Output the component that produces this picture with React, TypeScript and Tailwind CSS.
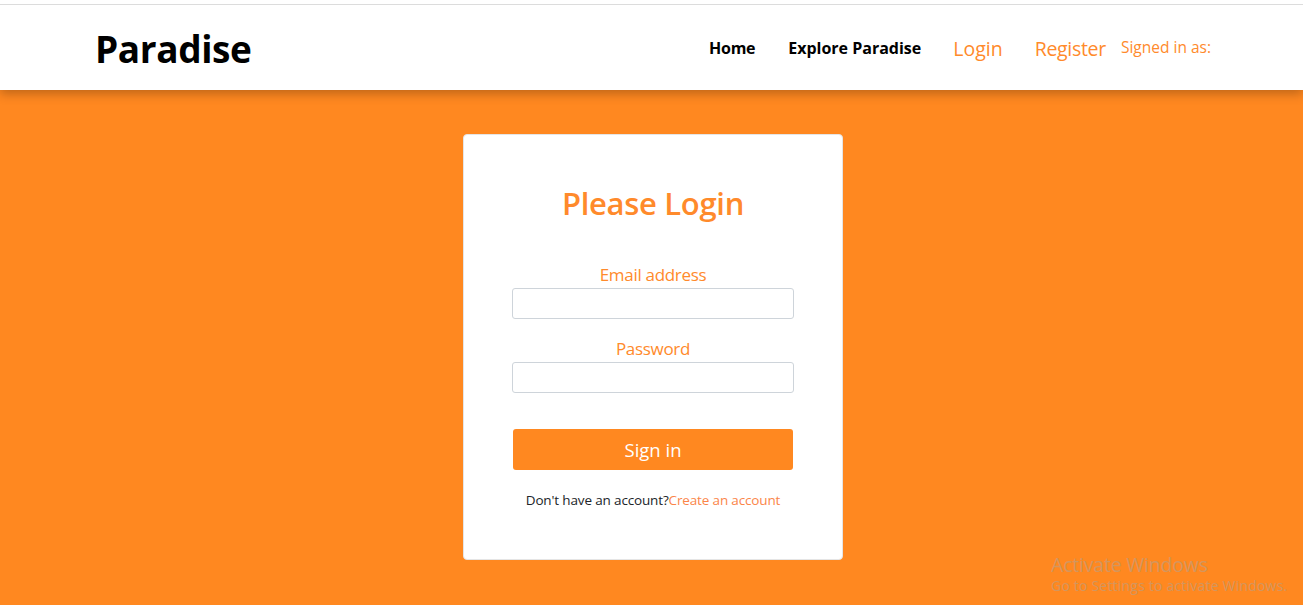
import React from 'react';

const font = { fontFamily: '"Open Sans", "Noto Sans", Arial, sans-serif' };

const Header: React.FC = () => {
  return (
    <header className="bg-white pt-1 relative z-10 shadow-[0_4px_10px_rgba(0,0,0,0.25)]">
      <div className="border-t border-[#dcdcdc] h-[86px] flex items-center pl-[95px] pr-[92px]">
        <h1 className="text-[37px] font-bold text-black tracking-[-0.4px] mt-[2px]">Paradise</h1>
        <nav className="ml-auto flex items-center">
          <a className="text-[16px] font-bold text-black mr-[33px] tracking-[-0.3px]">Home</a>
          <a className="text-[16px] font-bold text-black mr-[32px]">Explore Paradise</a>
          <a className="text-[19.5px] text-[#ff8a2b] mr-[32px] mt-[2px]">Login</a>
          <a className="text-[19.5px] text-[#ff8a2b] mr-[15px] mt-[2px] tracking-[-0.3px]">Register</a>
          <span className="text-[15.5px] text-[#ff8a2b]">Signed in as:</span>
        </nav>
      </div>
    </header>
  );
};

const LoginCard: React.FC = () => {
  return (
    <div className="w-[380px] bg-white rounded border border-[#e5e5e5] px-[48px] pt-[46px] pb-[49px] flex flex-col items-center">
      <h2 className="text-[31px] font-semibold text-[#ff8a2b] leading-[44px] tracking-[-0.3px]">Please Login</h2>
      <form className="w-full mt-[38px] flex flex-col items-center">
        <label className="text-[17px] text-[#ff8a2b] leading-[24px] tracking-[-0.3px]">Email address</label>
        <input type="email" className="w-[282px] h-[31px] mt-[1px] border border-[#ced4da] rounded-[3px] bg-white" />
        <label className="text-[17px] text-[#ff8a2b] leading-[24px] mt-[18px] tracking-[-0.3px]">Password</label>
        <input type="password" className="w-[282px] h-[31px] mt-[1px] border border-[#ced4da] rounded-[3px] bg-white" />
        <button type="button" className="w-[280px] h-[41px] mt-[36px] bg-[#ff8820] text-white text-[18.5px] rounded-[3px]">
          Sign in
        </button>
        <p className="mt-[20px] text-[13.5px] text-[#212529] tracking-[-0.15px]">
          Don't have an account?<a className="text-[#fb8549]">Create an account</a>
        </p>
      </form>
    </div>
  );
};

const App: React.FC = () => {
  return (
    <div className="min-h-[605px] bg-[#ff8820] relative" style={font}>
      <Header />
      <main className="flex justify-center pt-[44px] pb-[45px] pl-[3px]">
        <LoginCard />
      </main>
      <div className="absolute left-[1051px] top-[553px] text-[#c99a6e] opacity-80 pointer-events-none">
        <div className="text-[19.5px] leading-[24px] tracking-[-0.2px]">Activate Windows</div>
        <div className="text-[14px] leading-[18px] tracking-[0.2px]">Go to Settings to activate Windows.</div>
      </div>
    </div>
  );
};

export default App;
